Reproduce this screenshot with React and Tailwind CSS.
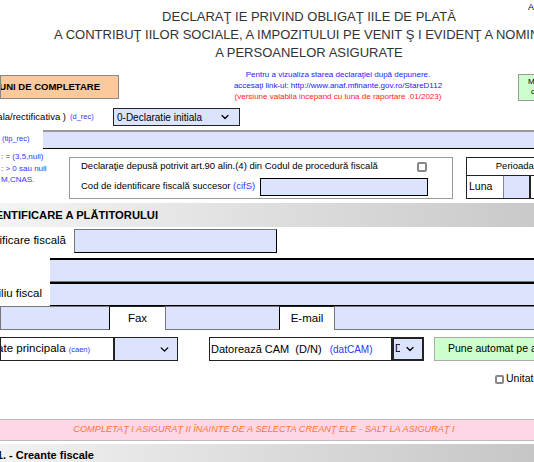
import React from 'react';
import { ChevronDown } from 'lucide-react';

const Blue = ({ children, className = '' }) => (
  <span className={`text-[#3333ff] ${className}`}>{children}</span>
);

const Field = ({ className = '' }) => (
  <div className={`shrink-0 bg-[#dce3fc] border border-[#777] border-b-black border-r-black ${className}`} />
);

const Clip = ({ children, className = '' }) => (
  <div className={`flex justify-end items-center overflow-hidden whitespace-nowrap shrink-0 ${className}`}>
    <span className="shrink-0">{children}</span>
  </div>
);

export default function App() {
  return (
    <div className="relative w-[534px] h-[462px] overflow-hidden bg-white text-black font-['Liberation_Sans',Arial,sans-serif]">
      {/* header */}
      <div className="h-[69px] pt-[8px]">
        <div className="w-[618px] text-center text-[13px] leading-[18px] text-[#333] whitespace-nowrap">
          <div>DECLARAŢ IE PRIVIND OBLIGAŢ IILE DE PLATĂ</div>
          <div>A CONTRIBUŢ IILOR SOCIALE, A IMPOZITULUI PE VENIT Ş I EVIDENŢ A NOMINALĂ</div>
          <div>A PERSOANELOR ASIGURATE</div>
        </div>
      </div>
      <div className="absolute left-[528px] top-[1px] text-[9px] whitespace-nowrap">Anexa nr. 1</div>

      {/* instructions + info */}
      <div className="flex h-[33px]">
        <Clip className="mt-[6px] h-[24px] w-[119px] pr-[18px] bg-[#fbc99b] border border-[#888] text-[9.5px] font-bold">
          INSTRUCŢIUNI DE COMPLETARE
        </Clip>
        <div className="shrink-0 ml-[39px] w-[360px] text-center text-[8px] leading-[11px] whitespace-nowrap">
          <div className="text-[#2222ff]">Pentru a vizualiza starea declaraţiei după depunere.</div>
          <div className="text-[#2222ff]">accesaţi link-ul: http://www.anaf.mfinante.gov.ro/StareD112</div>
          <div className="text-[#ff2222]">(versiune valabila incepand cu luna de raportare&nbsp; 01/2023)</div>
        </div>
        <div className="mt-[5px] h-[27px] w-[40px] shrink-0 bg-[#ccffcc] border border-[#999] text-[8px] leading-[10px] pt-[2px] pl-[9px] whitespace-nowrap">
          <div>Modificare</div>
          <div className="pl-[3px]">cifre</div>
        </div>
      </div>

      {/* d_rec */}
      <div className="flex items-center h-[18px] mt-[6px] text-[9.5px]">
        <Clip className="w-[66px] h-full">Tip declaraţie (initiala/rectificativa )</Clip>
        <Blue className="shrink-0 ml-[4px] text-[7.5px] w-[43px]">(d_rec)</Blue>
        <div className="shrink-0 flex items-center justify-between w-[127px] h-[18px] bg-[#dce3fc] border border-[#222] pl-[3px] pr-[8px] text-[10px]">
          <span>0-Declaratie initiala</span>
          <ChevronDown size={12} strokeWidth={2.5} />
        </div>
      </div>

      {/* tip_rec */}
      <div className="flex items-center h-[20px] mt-[3px]">
        <div className="shrink-0 w-[43px] pl-[2px] text-[7.5px] whitespace-nowrap">
          <Blue>(tip_rec)</Blue>
        </div>
        <div className="shrink-0 w-[600px] h-[19px] bg-[#dce3fc] border-t-2 border-t-[#999] border-b border-b-black" />
      </div>

      {/* art.90 + perioada */}
      <div className="flex h-[50px] mt-[1px]">
        <div className="shrink-0 w-[69px] text-[8px] leading-[11.5px] text-[#3333ff] pt-[1px] pl-[1px] whitespace-nowrap">
          <div>: = (3,5,null)</div>
          <div>: &gt; 0 sau null</div>
          <div>M,CNAS.</div>
        </div>
        <div className="shrink-0 mt-[7px] w-[384px] h-[42px] border border-[#999] pl-[11px] pr-[25px] text-[9.5px] flex flex-col justify-center gap-[5px]">
          <div className="flex items-center justify-between h-[12px]">
            <span>Declaraţie depusă potrivit art.90 alin.(4) din Codul de procedură fiscală</span>
            <span className="shrink-0 w-[10px] h-[10px] border-2 border-[#888] rounded-[2px]" />
          </div>
          <div className="flex items-center h-[18px]">
            <span className="shrink-0 w-[179px]">
              Cod de identificare fiscală succesor <Blue>(cifS)</Blue>
            </span>
            <div className="shrink-0 w-[168px] h-[18px] bg-[#dce3fc] border border-black" />
          </div>
        </div>
        <div className="ml-[13px] mt-[7px] w-[152px] h-[42px] border border-[#222] text-[9.5px] shrink-0 flex flex-col">
          <div className="h-[18px] flex items-center justify-center border-b border-[#222]">Perioada de raportare</div>
          <div className="flex flex-1">
            <div className="shrink-0 w-[36px] flex items-center pl-[2px] text-[10.5px]">Luna</div>
            <div className="shrink-0 w-[28px] bg-[#dce3fc] border-l border-[#888] border-r-2 border-r-[#222]" />
            <div className="flex-1 flex items-center pl-[3px]">Anul</div>
          </div>
        </div>
      </div>

      {/* section bar */}
      <div className="mt-[3px] h-[24px] flex items-center bg-gradient-to-r from-[#f4f4f4] to-[#c9c9c9]">
        <Clip className="w-[158px] text-[11.2px] font-bold">I. DATE DE IDENTIFICARE A PLĂTITORULUI</Clip>
      </div>

      {/* cif */}
      <div className="flex items-center h-[24px] mt-[2px] text-[11.5px]">
        <Clip className="w-[66px] h-full">Cod de identificare fiscală</Clip>
        <Field className="ml-[8px] w-[203px] h-[24px]" />
      </div>

      {/* denumire / domiciliu */}
      <div className="mt-[5px] text-[11.5px]">
        <div className="flex h-[24px]">
          <div className="w-[50px] shrink-0" />
          <div className="shrink-0 w-[600px] bg-[#dce3fc] border-t-2 border-t-black border-b border-b-[#777]" />
        </div>
        <div className="flex h-[24px]">
          <Clip className="w-[50px] h-full pr-[8px]">Domiciliu fiscal</Clip>
          <div className="shrink-0 w-[600px] bg-[#dce3fc] border-t-2 border-t-black border-b border-b-black" />
        </div>
      </div>

      {/* telefon / fax / email */}
      <div className="flex h-[24px] text-[11.5px]">
        <div className="w-[110px] shrink-0 bg-[#dce3fc] border border-[#777] border-r-black" />
        <div className="w-[55px] shrink-0 flex items-center justify-center border-t border-[#222]">Fax</div>
        <div className="w-[115px] shrink-0 bg-[#dce3fc] border border-[#777] border-r-black" />
        <div className="w-[54px] shrink-0 flex items-center justify-center border-t border-[#222]">E-mail</div>
        <div className="w-[300px] shrink-0 bg-[#dce3fc] border border-[#777]" />
      </div>

      {/* caen / CAM */}
      <div className="flex items-center h-[24px] mt-[7px]">
        <Clip className="w-[114px] h-full pr-[23px] border border-[#222] text-[11.5px]">
          Activitate principala <Blue className="text-[7.5px]">(caen)</Blue>
        </Clip>
        <div className="shrink-0 w-[64px] h-full flex items-center justify-end pr-[6px] bg-[#dce3fc] border border-[#222]">
          <ChevronDown size={13} strokeWidth={2.5} />
        </div>
        <div className="shrink-0 ml-[31px] w-[183px] h-full flex items-center pl-[1px] border border-[#222] text-[11px] whitespace-nowrap">
          Datorează CAM&nbsp; (D/N)&nbsp; <Blue className="ml-[5px] text-[10px]">(datCAM)</Blue>
        </div>
        <div className="shrink-0 w-[32px] h-full flex items-center overflow-hidden bg-[#dce3fc] border-2 border-[#222] text-[10.5px]">
          <span className="shrink-0 w-[6px] overflow-hidden pl-[1px]">D</span>
          <ChevronDown size={12} strokeWidth={2.5} className="ml-[4px] shrink-0" />
        </div>
        <div className="ml-[10px] w-[180px] shrink-0 h-full flex items-center pl-[13px] bg-[#ccffcc] border border-[#aaa] text-[10.5px] whitespace-nowrap">
          Pune automat pe asiguraţi
        </div>
      </div>

      {/* unitate */}
      <div className="flex items-center h-[12px] mt-[12px] ml-[495px] text-[10.5px] whitespace-nowrap">
        <span className="w-[9px] h-[9px] border-2 border-[#888] rounded-[2px] shrink-0" />
        <span className="ml-[2px] shrink-0">Unitate protejată</span>
      </div>

      {/* pink bar */}
      <div className="mt-[34px] h-[22px] flex items-center bg-[#ffd6e6] border-y border-[#bbb]">
        <div className="shrink-0 w-[528px] text-center text-[9.2px] italic text-[#ff7733] whitespace-nowrap">
          COMPLETAŢ I ASIGURAŢ II ÎNAINTE DE A SELECTA CREANŢ ELE - SALT LA ASIGURAŢ I
        </div>
      </div>

      {/* creante bar */}
      <div className="mt-[3px] h-[22px] flex items-center bg-gradient-to-r from-[#f2f2f2] to-[#c6c6c6]">
        <Clip className="w-[96px] pr-[2px] text-[11px] font-bold">II.1. - Creante fiscale</Clip>
      </div>
    </div>
  );
}
